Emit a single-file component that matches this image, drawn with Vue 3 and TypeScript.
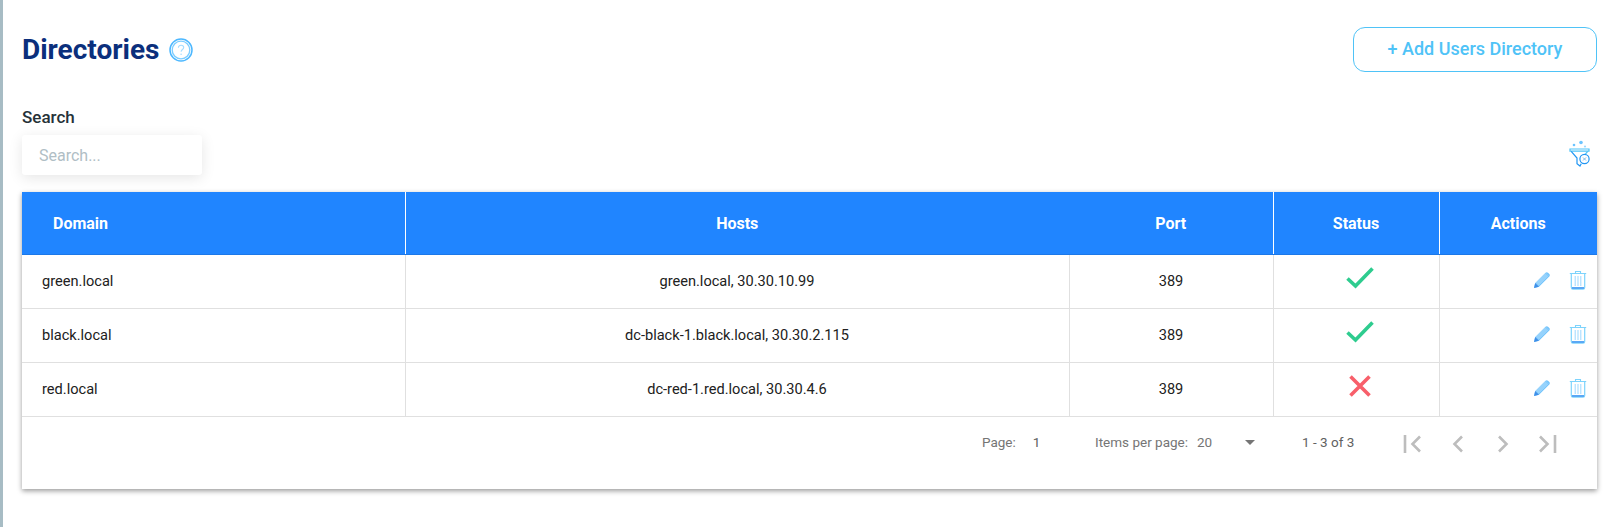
<script setup lang="ts">
interface Row { domain: string; hosts: string; port: number; ok: boolean }
const rows: Row[] = [
  { domain: 'green.local', hosts: 'green.local, 30.30.10.99', port: 389, ok: true },
  { domain: 'black.local', hosts: 'dc-black-1.black.local, 30.30.2.115', port: 389, ok: true },
  { domain: 'red.local', hosts: 'dc-red-1.red.local, 30.30.4.6', port: 389, ok: false },
]
</script>

<template>
  <div class="page">
    <header class="top">
      <div class="title">
        <h1>Directories</h1>
        <svg class="help" width="24" height="24" viewBox="0 0 24 24" fill="none">
          <circle cx="12" cy="12" r="11" stroke="#4db8ff" stroke-width="1.500" />
          <circle cx="12" cy="12" r="8.800" stroke="#7ccdff" stroke-width="1.300" />
          <path d="M9.400 9.800c0-1.600 1.200-2.600 2.700-2.600s2.600 1 2.600 2.300c0 1.900-2.600 2.100-2.600 4.200" stroke="#a5dcff" stroke-width="1.100" />
          <circle cx="12.100" cy="16.300" r=".8" fill="#a5dcff" />
        </svg>
      </div>
      <button class="add">+ Add Users Directory</button>
    </header>

    <div class="filters">
      <div class="search">
        <label for="q">Search</label>
        <input id="q" placeholder="Search..." />
      </div>
      <svg class="funnel" width="22" height="28" viewBox="0 0 22 28" fill="none">
        <circle cx="5" cy="5" r="1.300" fill="#6cc4ff" />
        <circle cx="12" cy="2.500" r="1.800" fill="#6cc4ff" />
        <circle cx="16" cy="6.500" r="1.100" fill="#9bd8ff" />
        <path d="M1 9h19v2.200H1z" stroke="#4fc3f7" stroke-width="1.200" />
        <path d="M2.200 11.400 8 18v5.600l3 2.400 1.200-2.200" stroke="#2196f3" stroke-width="1.200" />
        <path d="M18.800 11.400 16.400 14" stroke="#4fc3f7" stroke-width="1.200" />
        <circle cx="15.500" cy="19" r="4.600" stroke="#2196f3" stroke-width="1.200" />
        <path d="m14 17.500 3 3m0-3-3 3" stroke="#7fb9e6" stroke-width="1" />
      </svg>
    </div>

    <section class="card">
      <table>
        <colgroup>
          <col class="c1" /><col class="c2" /><col class="c3" /><col class="c4" /><col />
        </colgroup>
        <thead>
          <tr>
            <th class="domain sep">Domain</th>
            <th>Hosts</th>
            <th class="sep">Port</th>
            <th class="sep">Status</th>
            <th>Actions</th>
          </tr>
        </thead>
        <tbody>
          <tr v-for="r in rows" :key="r.domain">
            <td class="left">{{ r.domain }}</td>
            <td>{{ r.hosts }}</td>
            <td>{{ r.port }}</td>
            <td class="state">
              <svg v-if="r.ok" class="status" width="28" height="24" viewBox="0 0 28 24" fill="none">
                <path d="M1.500 12.500 9.500 20 26.500 2.500" stroke="#2ecc8f" stroke-width="3.600" />
              </svg>
              <svg v-else class="status" width="24" height="24" viewBox="0 0 24 24" fill="none">
                <path d="M2.500 2.500 21.500 21.500M21.500 2.500 2.500 21.500" stroke="#f85f6a" stroke-width="3.600" />
              </svg>
            </td>
            <td class="acts">
              <span class="act-icons">
                <svg width="18" height="18" viewBox="0 0 18 18" fill="none">
                  <path d="M1 17l1.200-5L12.500 1.700c.7-.7 1.800-.7 2.500 0l1.300 1.300c.7.7.7 1.800 0 2.500L6 15.800z" fill="#74c4fb" />
                  <path d="M3 12.500 13 2.500M5 14.500 15 4.500M4 13.500l10-10" stroke="#d4ecff" stroke-width=".7" />
                  <path d="M1 17l1.200-5 3.800 3.800z" fill="#3f8fe8" />
                </svg>
                <svg width="18" height="20" viewBox="0 0 18 20" fill="none">
                  <path d="M.8 3.500h16.400M6.500 3V1.500h5V3" stroke="#7dd3fc" stroke-width="1.100" />
                  <path d="M2.300 4v13.500c0 1 .7 1.700 1.700 1.700h10c1 0 1.700-.7 1.700-1.700V4" stroke="#7dd3fc" stroke-width="1.200" />
                  <path d="M6.200 6v10M9 6v10M11.800 6v10" stroke="#a6dcff" stroke-width="1.100" />
                  <path d="M3 18h12" stroke="#5aa8f5" stroke-width="2" />
                </svg>
              </span>
            </td>
          </tr>
        </tbody>
      </table>

      <footer class="pager">
        <span class="page-no"><span>Page:</span><span class="num">1</span></span>
        <span class="per">
          <span>Items per page:</span><span class="val">20</span>
          <i class="caret"></i>
        </span>
        <span class="range">1 - 3 of 3</span>
        <span class="navs">
          <svg width="22" height="22" viewBox="0 0 22 22" fill="none" stroke="#bdbdbd" stroke-width="2.600"><path d="M3 2v18M18 3.500 10.500 11l7.500 7.500" /></svg>
          <svg width="22" height="22" viewBox="0 0 22 22" fill="none" stroke="#bdbdbd" stroke-width="2.600"><path d="M15 3.500 7.500 11l7.500 7.500" /></svg>
          <svg width="22" height="22" viewBox="0 0 22 22" fill="none" stroke="#bdbdbd" stroke-width="2.600"><path d="M7 3.500l7.500 7.500L7 18.500" /></svg>
          <svg width="22" height="22" viewBox="0 0 22 22" fill="none" stroke="#bdbdbd" stroke-width="2.600"><path d="M18 2v18M3 3.500l7.500 7.500L3 18.500" /></svg>
        </span>
      </footer>
    </section>
  </div>
</template>

<style>
html, body { background: #fff; }
</style>

<style scoped>
.page {
  box-sizing: border-box;
  width: 1614px;
  height: 527px;
  padding: 27px 17px 0 19px;
  border-left: 3px solid #a7bcc4;
  font-family: Roboto, "Liberation Sans", sans-serif;
  color: #212121;
  overflow: hidden;
}
.top { display: flex; justify-content: space-between; align-items: flex-start; height: 45px; }
.title { display: flex; align-items: center; gap: 10px; height: 45px; }
h1 { margin: 0; font-size: 28px; font-weight: 700; color: #0b2f7c; line-height: 45px; }
.help { margin-top: 1px; }
.add {
  box-sizing: border-box;
  width: 244px;
  height: 45px;
  padding: 0 0 2px;
  background: #fff;
  border: 1px solid #4fc3f7;
  border-radius: 12px;
  color: #4fc3f7;
  font: 500 18px Roboto, sans-serif;
}
.filters { display: flex; justify-content: space-between; align-items: flex-end; height: 120px; padding-bottom: 17px; box-sizing: border-box; }
.search { display: flex; flex-direction: column; }
.search label { font-size: 17px; font-weight: 500; line-height: 20px; margin-bottom: 8px; color: #263238; }
.search input {
  box-sizing: border-box;
  width: 180px;
  height: 40px;
  border: 0;
  outline: 0;
  border-radius: 3px;
  padding: 0 17px;
  font: 400 16px Roboto, sans-serif;
  box-shadow: 0 3px 14px rgba(0, 0, 0, .1);
  background: #fff;
}
.search input::placeholder { color: #b0bec5; }
.funnel { margin: 0 6px 7px 0; }
.card { box-shadow: 0 2px 5px rgba(0, 0, 0, .4); height: 297px; background: #fff; }
table { width: 100%; border-collapse: collapse; table-layout: fixed; font-size: 14.600px; }
.c1 { width: 383px; } .c2 { width: 664px; } .c3 { width: 204px; } .c4 { width: 166px; }
th {
  height: 62px;
  padding: 0;
  background: #2085ff;
  color: #fff;
  font-size: 16px;
  font-weight: 700;
  text-align: center;
  border-bottom: 1px solid #1c78e8;
}
th.sep { border-right: 1px solid #fff; }
th.domain { text-align: left; padding-left: 31px; }
td {
  height: 54px;
  padding: 0 0 2px;
  text-align: center;
  border: 1px solid #e0e0e0;
  border-top: 0;
  box-sizing: border-box;
}
td:first-child { border-left: 0; }
td:last-child { border-right: 0; }
td.left { text-align: left; padding-left: 20px; }
td.state { padding-left: 8px; }
.status { display: block; margin: -5px auto 0; }
.acts { text-align: right; padding-right: 10px; white-space: nowrap; }
.act-icons { display: inline-flex; align-items: center; gap: 18px; margin-top: -2px; vertical-align: middle; }
.pager { display: flex; align-items: center; height: 50px; padding-left: 960px; font-size: 13.500px; color: #757575; }
.page-no { display: inline-flex; gap: 17px; width: 113px; }
.num { color: #616161; }
.per { display: inline-flex; align-items: center; width: 207px; }
.val { margin-left: 9px; width: 48px; }
.caret { width: 0; height: 0; border: 5px solid transparent; border-top: 5px solid #757575; border-bottom: 0; }
.range { width: 100px; color: #616161; }
.navs { display: inline-flex; gap: 23px; margin-top: 3px; }
</style>
